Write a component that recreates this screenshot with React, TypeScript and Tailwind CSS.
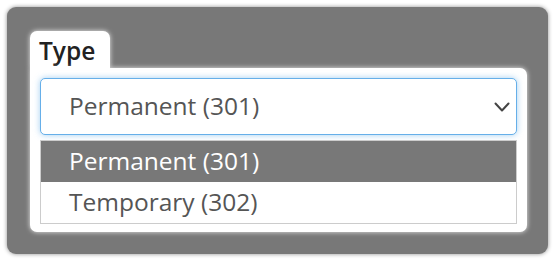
import React from 'react'

const options = ['Permanent (301)', 'Temporary (302)']

export default function App(): React.JSX.Element {
  const [selected] = React.useState(0)

  return (
    <div
      className="h-[262px] w-[555px] bg-white p-[7px]"
      style={{ fontFamily: '"Open Sans", "Noto Sans", sans-serif' }}
    >
      <div className="flex h-[247px] w-[541px] flex-col rounded-[9px] bg-[#787878] pl-[23px] pr-[21px] pt-[24px] shadow-[0_0_4px_rgba(0,0,0,0.45)]">
        {/* Tab */}
        <div className="flex h-[37px] w-[80px] items-center rounded-t-[7px] bg-white pl-[9px] pt-[4px] shadow-[0_0_5px_rgba(255,255,255,0.85)]">
          <span className="text-[24.5px] font-semibold leading-none text-[#222]">Type</span>
        </div>

        {/* Card */}
        <div className="flex flex-col gap-[5px] rounded-b-[7px] rounded-tr-[7px] bg-white px-[10px] pb-[8px] pt-[10px] shadow-[0_0_5px_rgba(255,255,255,0.85)]">
          <div className="flex h-[57px] items-center justify-between rounded-[5px] border border-[#66afe9] bg-white pl-[28px] pr-[6px] shadow-[0_0_6px_rgba(102,175,233,0.6)]">
            <span className="text-[24.5px] leading-none text-[#555]">{options[selected]}</span>
            <svg viewBox="0 0 16 10" className="h-[10px] w-[16px]" fill="none" stroke="#444" strokeWidth={2} strokeLinecap="round" strokeLinejoin="round">
              <path d="M1.5 1.5l6.5 7 6.5-7" />
            </svg>
          </div>

          <ul className="border border-[#ccc]">
            {options.map((opt, i) => (
              <li
                key={opt}
                className={
                  i === selected
                    ? 'flex h-[41px] items-center bg-[#787878] pl-[28px] text-[24.5px] text-white'
                    : 'flex h-[41px] items-center bg-white pl-[28px] text-[24.5px] text-[#555]'
                }
              >
                {opt}
              </li>
            ))}
          </ul>
        </div>
      </div>
    </div>
  )
}
